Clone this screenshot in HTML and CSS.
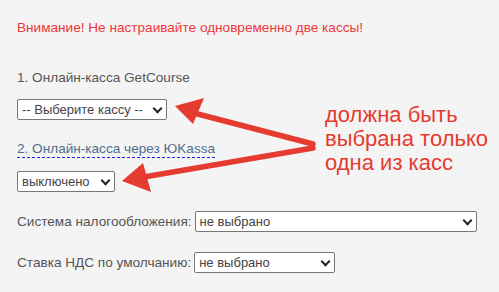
FILE: index.html
```html
<!DOCTYPE html>
<html lang="ru">
<head>
<meta charset="utf-8">
<link rel="stylesheet" href="styles.css">
</head>
<body>
<div class="page">
  <p class="warn">Внимание! Не настраивайте одновременно две кассы!</p>
  <div class="field first">
    <div class="label">1. Онлайн-касса GetCourse</div>
    <div class="select s1"><span class="val">-- Выберите кассу --</span><span class="chev"></span></div>
  </div>
  <div class="field second">
    <div class="label link"><span>2. Онлайн-касса через ЮKassa</span></div>
    <div class="select s2"><span class="val">выключено</span><span class="chev"></span></div>
  </div>
  <div class="row r1">
    <span class="rl">Система налогообложения:</span>
    <div class="select s3"><span class="val">не выбрано</span><span class="chev"></span></div>
  </div>
  <div class="row r2">
    <span class="rl">Ставка НДС по умолчанию:</span>
    <div class="select s4"><span class="val">не выбрано</span><span class="chev"></span></div>
  </div>
  <svg class="arrows" width="499" height="292" viewBox="0 0 499 292">
    <line x1="313" y1="144" x2="190" y2="112" stroke="#e53b30" stroke-width="5.5" stroke-linecap="round"/>
    <polygon points="175,106 204,98 193,124" fill="#e53b30"/>
    <line x1="313" y1="148" x2="138" y2="178" stroke="#e53b30" stroke-width="5.5" stroke-linecap="round"/>
    <polygon points="122,181 143,163 151,192" fill="#e53b30"/>
  </svg>
  <div class="note">должна быть<br>выбрана только<br>одна из касс</div>
</div>
</body>
</html>
```
FILE: styles.css
```css
html, body { margin: 0; padding: 0; }
body {
  background: #f4f4f4;
  width: 499px;
  height: 292px;
  overflow: hidden;
  font-family: "Liberation Sans", Arial, sans-serif;
  font-size: 13.6px;
  color: #555;
}
.page { position: relative; padding: 20px 17px 0; height: 292px; box-sizing: border-box; }
.warn { margin: 0; color: #f0363c; line-height: 16px; }
.field { display: flex; flex-direction: column; align-items: flex-start; }
.first { margin-top: 34px; }
.second { margin-top: 21px; }
.label { line-height: 16px; margin-bottom: 13px; }
.link span { color: #4d6f8e; border-bottom: 1px dashed #2222ee; padding-bottom: 1px; }
.link { margin-bottom: 14px; }
.select {
  box-sizing: border-box;
  height: 21px;
  border: 1px solid #777;
  border-radius: 2px;
  background: #fff;
  color: #444;
  display: flex;
  align-items: center;
  padding: 0 5px 0 4px;
  font-size: 13px;
  white-space: nowrap;
  overflow: hidden;
}
.val { flex: 0 1 auto; overflow: hidden; }
.chev {
  flex: none;
  width: 5px; height: 5px;
  border-right: 2px solid #222;
  border-bottom: 2px solid #222;
  transform: rotate(45deg);
  margin: -3px 0 0 auto;
}
.s1 { width: 150px; }
.s2 { width: 98px; }
.row { display: flex; align-items: center; gap: 3px; }
.r1 { margin-top: 19px; }
.r2 { margin-top: 20px; }
.s3 { width: 282px; }
.s4 { width: 141px; }
.arrows { position: absolute; left: 0; top: 0; }
.note {
  position: absolute;
  left: 325px;
  top: 103px;
  color: #e53b30;
  font-size: 22px;
  line-height: 24px;
}
```
